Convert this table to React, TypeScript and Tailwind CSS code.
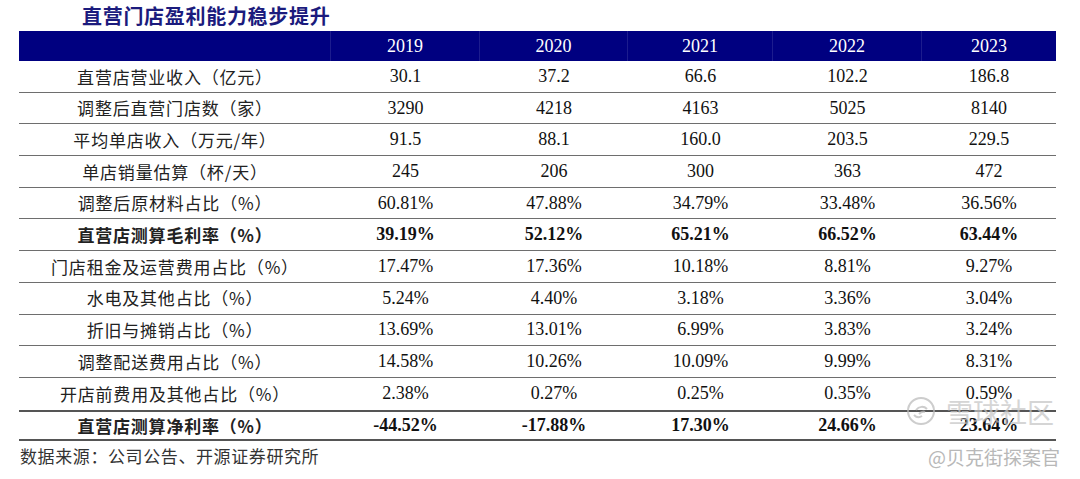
import React from "react";

const rows: { label: string; values: string[]; bold?: boolean }[] = [
  { label: "直营店营业收入（亿元）", values: ["30.1", "37.2", "66.6", "102.2", "186.8"] },
  { label: "调整后直营门店数（家）", values: ["3290", "4218", "4163", "5025", "8140"] },
  { label: "平均单店收入（万元/年）", values: ["91.5", "88.1", "160.0", "203.5", "229.5"] },
  { label: "单店销量估算（杯/天）", values: ["245", "206", "300", "363", "472"] },
  { label: "调整后原材料占比（%）", values: ["60.81%", "47.88%", "34.79%", "33.48%", "36.56%"] },
  { label: "直营店测算毛利率（%）", values: ["39.19%", "52.12%", "65.21%", "66.52%", "63.44%"], bold: true },
  { label: "门店租金及运营费用占比（%）", values: ["17.47%", "17.36%", "10.18%", "8.81%", "9.27%"] },
  { label: "水电及其他占比（%）", values: ["5.24%", "4.40%", "3.18%", "3.36%", "3.04%"] },
  { label: "折旧与摊销占比（%）", values: ["13.69%", "13.01%", "6.99%", "3.83%", "3.24%"] },
  { label: "调整配送费用占比（%）", values: ["14.58%", "10.26%", "10.09%", "9.99%", "8.31%"] },
  { label: "开店前费用及其他占比（%）", values: ["2.38%", "0.27%", "0.25%", "0.35%", "0.59%"] },
  { label: "直营店测算净利率（%）", values: ["-44.52%", "-17.88%", "17.30%", "24.66%", "23.64%"], bold: true },
];

const years = ["2019", "2020", "2021", "2022", "2023"];
const grid = "grid grid-cols-[312px_149px_148px_145px_149px_134px]";
const cjk = "font-['Noto_Sans_CJK_SC',sans-serif]";
const serif = "font-['Liberation_Serif','Noto_Sans_CJK_SC',serif]";

const App = () => {
  return (
    <div className="relative w-[1080px] h-[479px] bg-white overflow-hidden text-[#111]">
      <div className="h-[31px] pl-[82px] flex items-center">
        <h1 className={`${cjk} text-[20px] font-bold tracking-[0.7px] text-[#1b1b7d] leading-none`}>
          直营门店盈利能力稳步提升
        </h1>
      </div>

      <div className="ml-[19px] w-[1037px]">
        <div className={`${grid} h-[30px] bg-[#000080] text-white`}>
          <div className="border-r border-[#1c1c8e]" />
          {years.map((y, i) => (
            <div
              key={y}
              className={`${serif} text-[18px] flex items-center justify-center ${
                i < 4 ? "border-r border-[#1c1c8e]" : ""
              }`}
            >
              {y}
            </div>
          ))}
        </div>

        {rows.map((r, i) => {
          const last = i === rows.length - 1;
          return (
            <div
              key={r.label}
              className={`${grid} h-[31.7px] ${
                last ? "border-t-2 border-b-2 border-[#555]" : i < rows.length - 2 ? "border-b border-[#6e6e6e]" : ""
              } ${r.bold ? "font-bold" : ""}`}
            >
              <div className={`${cjk} text-[17px] tracking-[0.8px] flex items-center justify-center text-[#222]`}>
                {r.label}
              </div>
              {r.values.map((v, j) => (
                <div key={j} className={`${serif} text-[18px] flex items-center justify-center`}>
                  {v}
                </div>
              ))}
            </div>
          );
        })}
      </div>

      <div className={`${cjk} pl-[20px] pt-[6px] text-[17px] tracking-[0.6px] text-[#333] leading-none`}>
        数据来源：公司公告、开源证券研究所
      </div>

      <div className="absolute left-[906px] top-[396px] flex items-center gap-[10px] opacity-70 pointer-events-none">
        <svg width="30" height="30" viewBox="0 0 30 30" fill="none" stroke="#b8b8b8" strokeWidth="2">
          <circle cx="15" cy="15" r="13" />
          <path d="M8 19c2 2 5 3 8 1" />
          <path d="M10 14c3-4 8-4 11-1" />
          <path d="M13 18c2-2 4-3 6-2" />
        </svg>
        <span className={`${cjk} text-[27px] leading-none text-[#c4c4c4]`}>雪球社区</span>
      </div>
      <div className={`absolute left-[928px] top-[447px] ${cjk} text-[19px] leading-none text-[#b8b8b8] pointer-events-none`}>
        @贝克街探案官
      </div>
    </div>
  );
};

export default App;
